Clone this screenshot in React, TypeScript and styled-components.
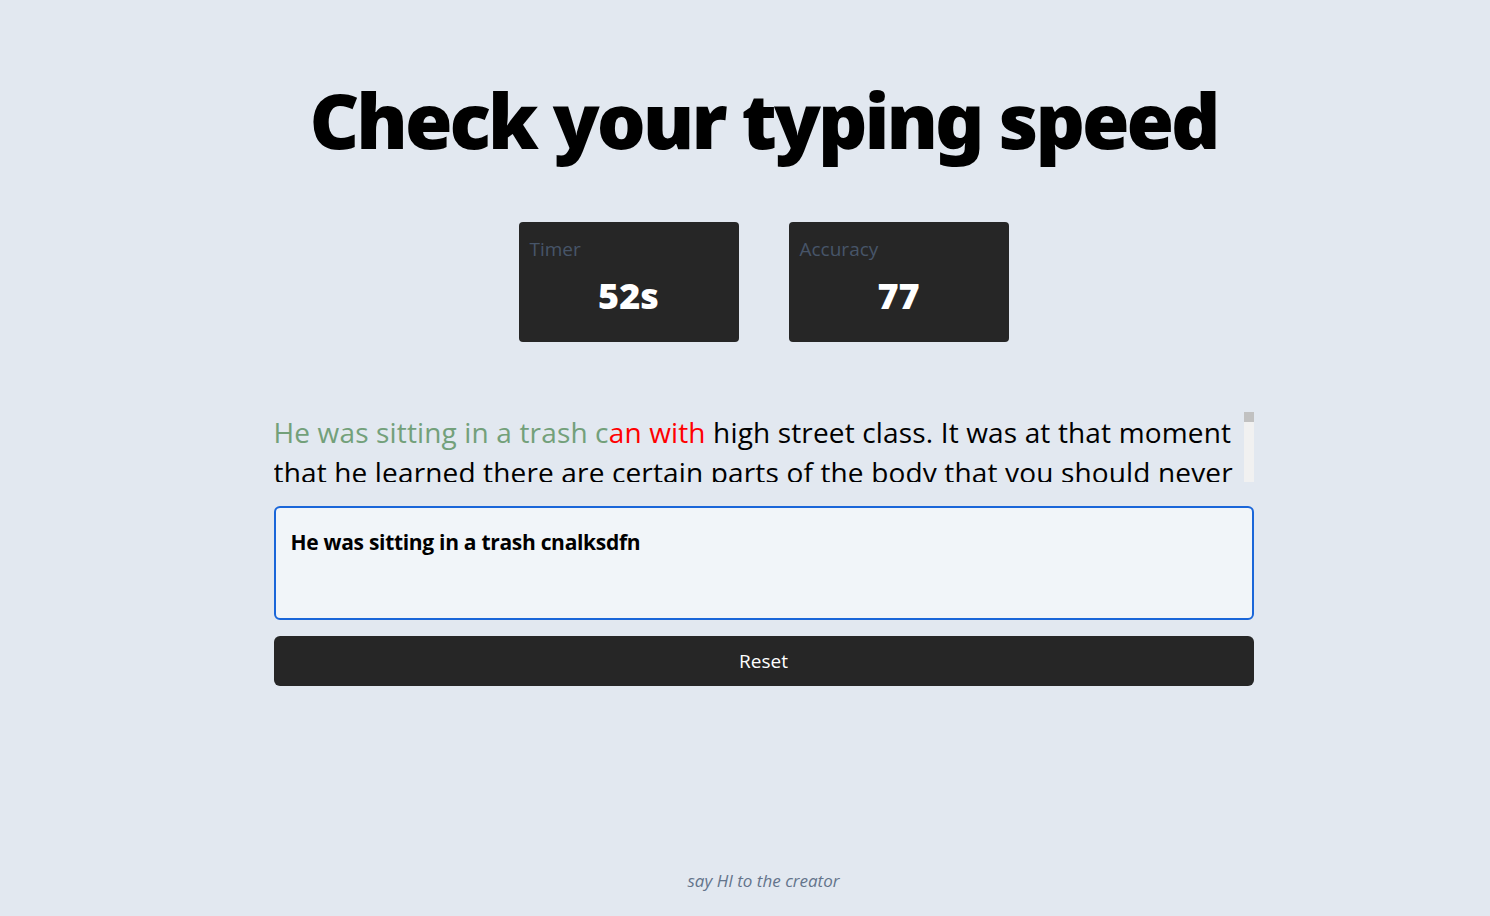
import React from 'react';
import styled, { createGlobalStyle } from 'styled-components';

const GlobalStyle = createGlobalStyle`
  html, body {
    margin: 0;
    padding: 0;
    background: #e2e8f0;
    font-family: 'Open Sans', 'Noto Sans', sans-serif;
  }
  * {
    box-sizing: border-box;
  }
`;

const Page = styled.main`
  min-height: 916px;
  display: flex;
  flex-direction: column;
  align-items: center;
  padding: 74px 0 0 37px;
`;

const Title = styled.h1`
  margin: 0;
  font-family: 'Noto Sans', sans-serif;
  font-weight: 900;
  font-size: 77px;
  letter-spacing: -3px;
  line-height: 1.2;
  color: #000;
`;

const Stats = styled.div`
  display: flex;
  gap: 50px;
  margin-top: 56px;
`;

const Card = styled.div`
  width: 220px;
  height: 120px;
  background: #262626;
  border-radius: 4px;
  padding: 14px 11px;
  display: flex;
  flex-direction: column;
`;

const Label = styled.span`
  font-family: 'Open Sans', sans-serif;
  font-size: 19px;
  line-height: 26px;
  color: #475569;
`;

const Value = styled.span`
  text-align: center;
  margin-top: 12px;
  font-family: 'Noto Sans', sans-serif;
  font-weight: 900;
  font-size: 36px;
  line-height: 44px;
  color: #fff;
`;

const Body = styled.section`
  width: 980px;
  margin-top: 70px;
  display: flex;
  flex-direction: column;
`;

const QuoteRow = styled.div`
  display: flex;
  height: 70px;
`;

const Quote = styled.p`
  flex: 1;
  margin: 0;
  overflow: hidden;
  font-family: 'Open Sans', sans-serif;
  font-size: 28px;
  line-height: 40px;
  letter-spacing: 0.15px;
  color: #000;
`;

const ScrollTrack = styled.div`
  width: 10px;
  background: #f1f1f1;
  display: flex;
  flex-direction: column;
`;

const ScrollThumb = styled.div`
  height: 10px;
  background: #c1c1c1;
`;

const Char = styled.span<{ $state: 'ok' | 'bad' | 'todo' }>`
  color: ${({ $state }) =>
    $state === 'ok' ? '#73a07a' : $state === 'bad' ? '#ff0000' : '#000'};
`;

const Input = styled.textarea`
  margin-top: 24px;
  width: 100%;
  height: 114px;
  resize: none;
  border: 2px solid #1a66d9;
  border-radius: 6px;
  background: #f1f5f9;
  padding: 19px 15px;
  font-family: 'Open Sans', sans-serif;
  font-weight: 700;
  font-size: 21px;
  line-height: 30px;
  letter-spacing: -0.3px;
  color: #000;
  outline: none;
`;

const ResetButton = styled.button`
  margin-top: 16px;
  width: 100%;
  height: 50px;
  border: none;
  border-radius: 6px;
  background: #262626;
  color: #fff;
  font-family: 'Open Sans', sans-serif;
  font-size: 19px;
  cursor: pointer;
`;

const Footer = styled.footer`
  margin-top: auto;
  padding-bottom: 24px;
  font-family: 'Open Sans', sans-serif;
  font-style: italic;
  font-size: 17px;
  color: #64748b;
`;

const text =
  'He was sitting in a trash can with high street class. It was at that moment that he learned there are certain parts of the body that you should never touch without asking first, and he never forgot it.';
const typed = 'He was sitting in a trash cnalksdfn';

const App = () => {
  const okEnd = 'He was sitting in a trash c'.length;
  const badEnd = 'He was sitting in a trash can with'.length;
  return (
    <>
      <GlobalStyle />
      <Page>
        <Title>Check your typing speed</Title>
        <Stats>
          <Card>
            <Label>Timer</Label>
            <Value>52s</Value>
          </Card>
          <Card>
            <Label>Accuracy</Label>
            <Value>77</Value>
          </Card>
        </Stats>
        <Body>
          <QuoteRow>
            <Quote>
              <Char $state="ok">{text.slice(0, okEnd)}</Char>
              <Char $state="bad">{text.slice(okEnd, badEnd)}</Char>
              <Char $state="todo">{text.slice(badEnd)}</Char>
            </Quote>
            <ScrollTrack>
              <ScrollThumb />
            </ScrollTrack>
          </QuoteRow>
          <Input defaultValue={typed} autoFocus />
          <ResetButton>Reset</ResetButton>
        </Body>
        <Footer>say HI to the creator</Footer>
      </Page>
    </>
  );
};

export default App;
